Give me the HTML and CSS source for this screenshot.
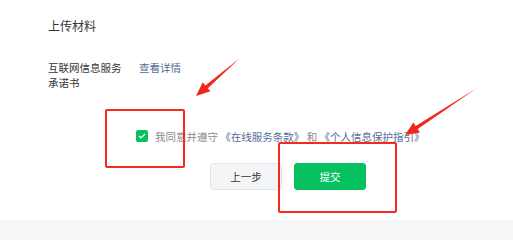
FILE: index.html
```html
<!DOCTYPE html>
<html lang="zh-CN">

<head>
    <meta charset="UTF-8">
    <title>上传材料</title>
    <link rel="stylesheet" href="styles.css">
</head>

<body>
    <div class="page">
        <div class="title">上传材料</div>

        <div class="row">
            <div class="label">互联网信息服务<br>承诺书</div>
            <a class="link" href="#">查看详情</a>
        </div>

        <div class="agree">
            <span class="check">
                <svg width="8" height="6" viewBox="0 0 8 6"><path d="M1 3 L3 5 L7 1" fill="none" stroke="#fff" stroke-width="1.2"/></svg>
            </span>
            <span class="agree-text">我同意并遵守 <a href="#">《在线服务条款》</a> 和 <a href="#">《个人信息保护指引》</a></span>
        </div>

        <div class="actions">
            <button class="btn btn-default">上一步</button>
            <button class="btn btn-primary">提交</button>
        </div>

        <!-- annotations -->
        <div class="mark mark-check"></div>
        <div class="mark mark-submit"></div>
        <svg class="arrows" width="513" height="220" viewBox="0 0 513 220">
            <polygon fill="#f3261b" points="240,58 207.8,88.2 210.5,91.3 196,96 202.7,82.3 205.4,85.4"/>
            <polygon fill="#f3261b" points="477,88 417.7,128.9 420,132.4 405,135 413.4,122.4 415.7,125.9"/>
        </svg>
    </div>
    <div class="footer"></div>
</body>

</html>
```

FILE: styles.css
```css
* {
    padding: 0px;
    margin: 0px;
    box-sizing: border-box;
}

body {
    font-family: "Noto Sans CJK SC", "Noto Sans", sans-serif;
    color: #353535;
    background: #fff;
}

a {
    text-decoration: none;
    color: #576b95;
}

.page {
    position: relative;
    height: 220px;
    overflow: hidden;
}

.title {
    padding: 18px 0 0 48px;
    font-size: 12px;
    line-height: 16px;
}

.row {
    display: flex;
    margin-top: 26px;
    padding-left: 48px;
    font-size: 10.5px;
    line-height: 15px;
}

.label {
    width: 91px;
}

.agree {
    display: flex;
    align-items: center;
    height: 16px;
    margin-top: 38px;
    padding-left: 136px;
    gap: 7px;
    font-size: 10.5px;
}

.check {
    display: flex;
    align-items: center;
    justify-content: center;
    width: 12px;
    height: 12px;
    border-radius: 2px;
    background: #07c160;
}

.agree-text {
    color: #8a8a8a;
    white-space: nowrap;
}

.actions {
    display: flex;
    gap: 12px;
    margin-top: 19px;
    padding-left: 210px;
}

.btn {
    width: 72px;
    height: 27px;
    border-radius: 3px;
    font-family: inherit;
    font-size: 10.5px;
    cursor: pointer;
}

.btn-default {
    background: #f4f5f7;
    border: 1px solid #e4e6ea;
    color: #353535;
}

.btn-primary {
    background: #07c160;
    border: 1px solid #07c160;
    color: #fff;
}

.mark {
    position: absolute;
    border: 2px solid #f52a1c;
    border-radius: 2px;
}

.mark-check {
    left: 105px;
    top: 109px;
    width: 80px;
    height: 59px;
}

.mark-submit {
    left: 278px;
    top: 142px;
    width: 119px;
    height: 71px;
}

.arrows {
    position: absolute;
    left: 0;
    top: 0;
}

.footer {
    height: 20px;
    background: #f5f6f7;
}
```
